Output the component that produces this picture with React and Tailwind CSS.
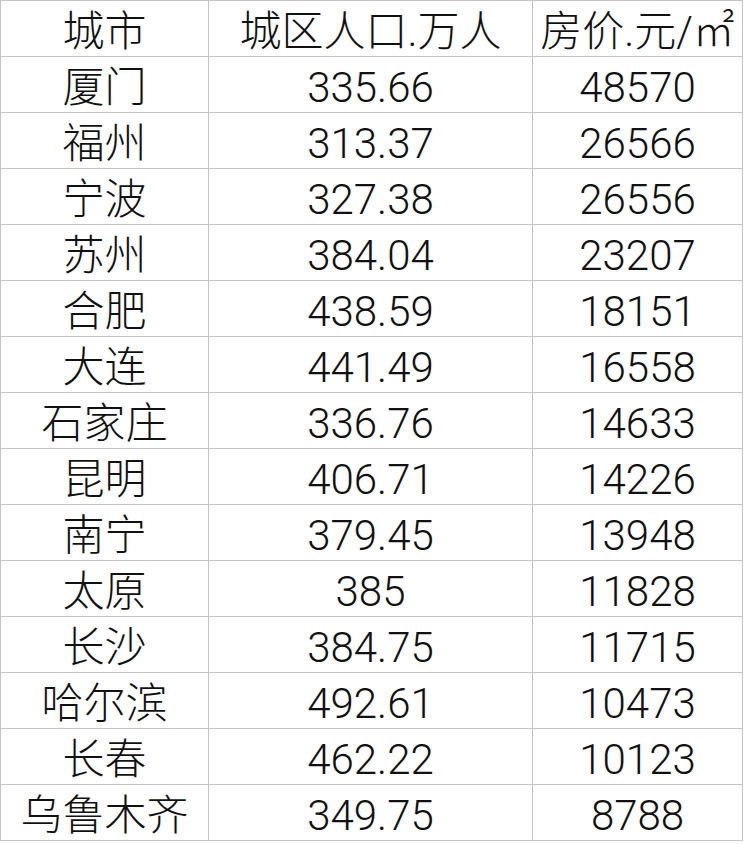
import React from 'react';

const rows = [
  ['厦门', '335.66', '48570'],
  ['福州', '313.37', '26566'],
  ['宁波', '327.38', '26556'],
  ['苏州', '384.04', '23207'],
  ['合肥', '438.59', '18151'],
  ['大连', '441.49', '16558'],
  ['石家庄', '336.76', '14633'],
  ['昆明', '406.71', '14226'],
  ['南宁', '379.45', '13948'],
  ['太原', '385', '11828'],
  ['长沙', '384.75', '11715'],
  ['哈尔滨', '492.61', '10473'],
  ['长春', '462.22', '10123'],
  ['乌鲁木齐', '349.75', '8788'],
];

const cell = 'h-[56px] border border-[#c4c4c4] p-0 text-center align-middle leading-none pt-[6px] font-light';

export default function App() {
  return (
    <div className="w-[744px] h-[844px] bg-white text-[#111] font-['Roboto','Noto_Sans_CJK_SC',sans-serif] text-[42px]">
      <table className="border-collapse w-[742px] table-fixed">
        <colgroup>
          <col className="w-[208px]" />
          <col className="w-[324px]" />
          <col className="w-[210px]" />
        </colgroup>
        <thead>
          <tr>
            <th className={cell}>城市</th>
            <th className={cell}>城区人口.万人</th>
            <th className={cell}>房价.元/㎡</th>
          </tr>
        </thead>
        <tbody>
          {rows.map((r) => (
            <tr key={r[0]}>
              <td className={cell}>{r[0]}</td>
              <td className={cell}>{r[1]}</td>
              <td className={cell}>{r[2]}</td>
            </tr>
          ))}
        </tbody>
      </table>
    </div>
  );
}
